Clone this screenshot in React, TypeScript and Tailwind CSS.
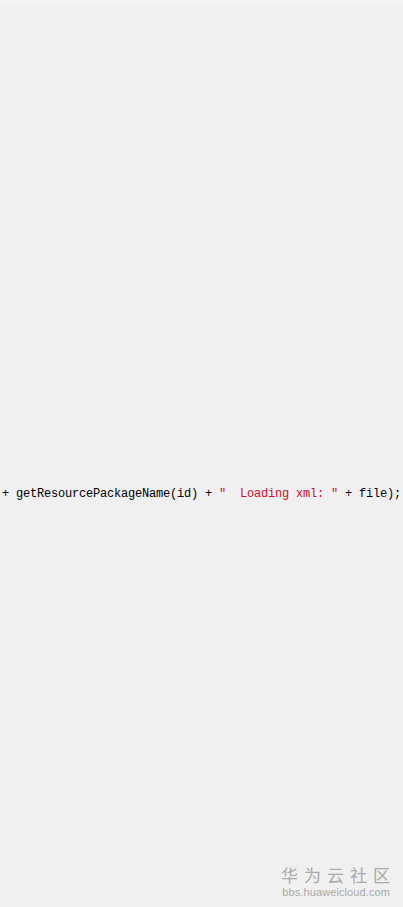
import React from 'react';

const App = () => {
  return (
    <div className="relative w-[403px] h-[907px] bg-[#f0f0f0] overflow-hidden">
      <div className="h-[4px] bg-[#f4f4f4]" />
      <div className="flex h-[903px] flex-col">
        <div className="h-[480px]" />
        <p className="pl-[2px] whitespace-pre font-['Liberation_Mono',monospace] text-[12px] leading-[20px] tracking-[-0.2px] text-black">
          {'+ getResourcePackageName(id) + '}
          <span className="text-[#c8102e]">{'"  Loading xml: "'}</span>
          {' + file);'}
        </p>
        <div className="flex-1" />
        <div className="flex flex-col items-end gap-[2px] pr-[13px] pb-[9px] text-[#a9a9a9]">
          <div className="font-['Noto_Sans_CJK_SC',sans-serif] text-[17px] leading-[18px] tracking-[6px] mr-[-6px]">
            华为云社区
          </div>
          <div className="font-['Liberation_Sans',sans-serif] text-[11px] leading-[12px] tracking-[0.1px]">
            bbs.huaweicloud.com
          </div>
        </div>
      </div>
    </div>
  );
};

export default App;
